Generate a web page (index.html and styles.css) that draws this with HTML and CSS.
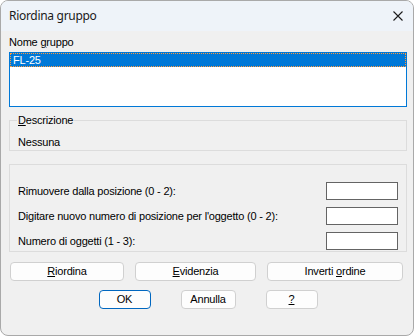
FILE: index.html
```html
<!DOCTYPE html>
<html lang="it">
<head>
<meta charset="utf-8">
<title>Riordina gruppo</title>
<link rel="stylesheet" href="styles.css">
</head>
<body>
<div class="window">
  <div class="titlebar">
    <span class="title">Riordina gruppo</span>
    <svg class="close" width="12" height="12" viewBox="0 0 12 12" aria-label="Chiudi">
      <path d="M1.5 1.5 L10.5 10.5 M10.5 1.5 L1.5 10.5" stroke="#1b1b1b" stroke-width="1.1" fill="none"/>
    </svg>
  </div>
  <div class="content">
    <div class="label-name">Nome <u>g</u>ruppo</div>
    <div class="listbox">
      <div class="item selected">FL-25</div>
    </div>
    <fieldset class="group desc">
      <legend><u>D</u>escrizione</legend>
      <div class="desc-value">Nessuna</div>
    </fieldset>
    <div class="group fields">
      <div class="field-row"><span>Rimuovere dalla posizione (0 - 2):</span><input class="num" type="text"></div>
      <div class="field-row"><span>Digitare nuovo numero di posizione per l'oggetto (0 - 2):</span><input class="num" type="text"></div>
      <div class="field-row"><span>Numero di oggetti (1 - 3):</span><input class="num" type="text"></div>
    </div>
    <div class="actions">
      <button class="btn w-riordina"><u>R</u>iordina</button>
      <button class="btn w-evidenzia"><u>E</u>videnzia</button>
      <button class="btn w-inverti">Inverti <u>o</u>rdine</button>
    </div>
    <div class="dialog-buttons">
      <button class="btn default w-ok">OK</button>
      <button class="btn w-annulla">Annulla</button>
      <button class="btn w-help"><u>?</u></button>
    </div>
  </div>
</div>
</body>
</html>
```
FILE: styles.css
```css
* { box-sizing: border-box; }
html, body { margin: 0; padding: 0; background: #ffffff; }
body { font-family: "Liberation Sans", Arial, sans-serif; font-size: 11px; color: #000; }

.window {
  width: 414px;
  height: 336px;
  border: 1px solid #a9a9a9;
  border-radius: 8px;
  overflow: hidden;
  background: #f0f0f0;
  display: flex;
  flex-direction: column;
}

.titlebar {
  height: 30px;
  flex: none;
  background: #eef3f9;
  display: flex;
  align-items: center;
  justify-content: space-between;
  padding: 0 9px 0 8px;
}
.title {
  font-family: "Noto Sans", "Open Sans", sans-serif;
  font-size: 12px;
  letter-spacing: -0.3px;
  color: #1a1a1a;
  line-height: 16px;
}
.close { display: block; margin-top: 0; }

.content {
  padding: 0 6px 0 8px;
  display: flex;
  flex-direction: column;
  letter-spacing: -0.2px;
}

.label-name {
  margin-top: 4px;
  line-height: 15px;
  height: 15px;
}

.listbox {
  margin-top: 2px;
  height: 55px;
  background: #fff;
  border: 1px solid #0078d7;
  padding: 0;
}
.item {
  height: 14px;
  line-height: 12px;
  padding-left: 2px;
}
.item.selected {
  background: #0078d7;
  color: #fff;
  border: 1px dotted #ff9a3c;
}

.group {
  border: 1px solid #dcdcdc;
  margin: 0;
  min-width: 0;
}
.desc {
  margin-top: 6px;
  padding: 0 8px 1px 8px;
}
.desc legend {
  padding: 0 1px;
  margin-left: -1px;
  line-height: 14px;
}
.desc-value {
  margin-top: 8px;
  line-height: 14px;
}

.fields {
  margin-top: 13px;
  padding: 17px 8px 1px 8px;
  display: flex;
  flex-direction: column;
  gap: 7px;
}
.field-row {
  display: flex;
  align-items: center;
  justify-content: space-between;
  height: 18px;
}
.num {
  width: 72px;
  height: 18px;
  border: 1px solid #646464;
  background: #fff;
  margin: 0;
  padding: 0;
  outline: none;
}

.btn {
  height: 19px;
  margin: 0;
  padding: 0;
  background: #fdfdfd;
  border: 1px solid #d0d0d0;
  border-radius: 4px;
  font: inherit;
  letter-spacing: inherit;
  color: #000;
  line-height: 15px;
}
.btn.default { border-color: #0067c0; }

.actions {
  margin-top: 10px;
  margin-left: 1px;
  display: flex;
  gap: 11px;
}
.w-riordina { width: 114px; }
.w-evidenzia { width: 121px; }
.w-inverti { width: 136px; }

.dialog-buttons {
  margin-top: 9px;
  display: flex;
  justify-content: center;
  gap: 30px;
}
.w-ok { width: 52px; }
.w-annulla { width: 55px; }
.w-help { width: 52px; }
```
